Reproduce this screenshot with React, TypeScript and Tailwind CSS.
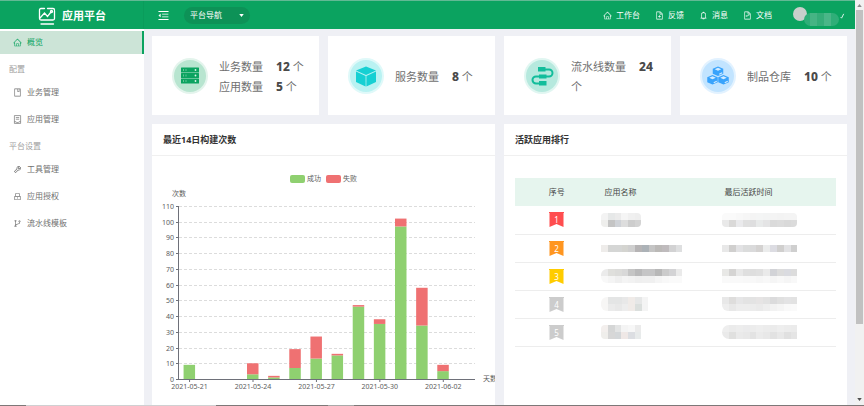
import type { ReactNode } from "react";
import type { IconType } from "react-icons";
import {
  AiOutlineBell,
  AiOutlineBook,
  AiOutlineBranches,
  AiOutlineFileAdd,
  AiOutlineFileText,
  AiOutlineHome,
  AiOutlineLock,
  AiOutlineMenuFold,
  AiOutlineTool,
} from "react-icons/ai";

function Logo() {
  return (
    <svg viewBox="0 0 36 36" className="size-[18px]" fill="none" stroke="white" strokeWidth="2.6" strokeLinecap="round">
      <path d="M13 3H6Q3 3 3 6v17q0 3 3 3h24q3 0 3-3V8M19 3h11q3 0 3 3" />
      <path d="M4 22l9-10 6 7 7-9" />
      <circle cx="27" cy="9" r="2" />
      <path d="M6 34h25" />
    </svg>
  );
}

function AppFormIcon({ className }: { className?: string }) {
  return (
    <svg viewBox="0 0 16 16" className={className} fill="none" stroke="currentColor" strokeWidth="1.2">
      <path d="M2.5 1h11v14h-11zM5 4.5h6M5 7.5h6M2.5 12h3l1 1.5h3l1-1.5h3" />
    </svg>
  );
}

function SideItem({ icon: Icon, label, active }: { icon: IconType | typeof AppFormIcon; label: string; active?: boolean }) {
  return (
    <a
      href="#"
      className={
        "mb-1 flex h-[23px] items-center gap-[5px] pb-px pl-[13px] " +
        (active ? "border-r-2 border-[#0ba360] bg-[#cce4d7] text-[#0ba360]" : "text-[#707070]")
      }
    >
      <Icon className="size-[9px]" />
      {label}
    </a>
  );
}

function SideLabel({ children }: { children: ReactNode }) {
  return <p className="flex h-[23px] items-center pb-0.5 pl-[9px] text-[#a0a0a0]">{children}</p>;
}

function TopLink({ icon: Icon, label }: { icon: IconType; label: string }) {
  return (
    <a href="#" className="flex items-center gap-1">
      <Icon className="size-[9px]" />
      {label}
    </a>
  );
}

function Badge({ ring, fill, children }: { ring: string; fill: string; children: ReactNode }) {
  return (
    <svg viewBox="0 0 72 72" className="size-9 shrink-0">
      <circle cx="36" cy="36" r="36" fill={ring} />
      <circle cx="36" cy="36" r="32" fill={fill} />
      {children}
    </svg>
  );
}

function ServerBadge() {
  return (
    <Badge ring="#e3f4ec" fill="#b8e5d0">
      {[19, 30, 41].map((y) => (
        <g key={y}>
          <rect x="18" y={y} width="36" height="10" rx="1" fill="#0ba360" />
          <path d={`M23 ${y + 3}v4M28 ${y + 3}v4`} stroke="#7fd0a8" strokeWidth="1.5" />
          <circle cx="47" cy={y + 5} r="1.8" fill="#d9f5e8" />
        </g>
      ))}
    </Badge>
  );
}

function CubeBadge() {
  return (
    <Badge ring="#dff9f9" fill="#b9f2f2">
      <path d="M36 17l20 8-20 9-20-9z" fill="#16d0d3" />
      <path d="M16 27l19.200 9v21L16 48z" fill="#16d0d3" />
      <path d="M56 27l-19.200 9v21L56 48z" fill="#16d0d3" />
    </Badge>
  );
}

function PipeBadge() {
  return (
    <Badge ring="#e0f6f1" fill="#b6e9de">
      <path d="M34 23h16a6.500 6.500 0 0 1 0 14H24a6.500 6.500 0 0 0 0 14h20" fill="none" stroke="#12bd9b" strokeWidth="4" />
      <path d="M28 18h15v9H28zM30 33h15v8H30zM30 46h15v9H30z" fill="#12bd9b" />
    </Badge>
  );
}

function BoxesBadge() {
  return (
    <Badge ring="#e2f2ff" fill="#c2e4ff">
      {[
        [36, 17],
        [25, 34],
        [47, 34],
      ].map(([x, y]) => (
        <g key={x} transform={`translate(${x} ${y})`}>
          <path d="M0 0l10.500 4.500v10L0 19l-10.500-4.500v-10z" fill="#38a3fc" />
          <path d="M0 2.500l6.500 3L0 8.500l-6.500-3z" fill="#d5ecff" />
          <path d="M2.500 15.500l6-3" stroke="#d5ecff" strokeWidth="2.500" />
        </g>
      ))}
    </Badge>
  );
}

function Stat({ label, value }: { label: string; value: number }) {
  return (
    <p>
      {label}
      <b className="ml-[13px] text-xs font-extrabold text-[#4a4a4a]">{value}</b> 个
    </p>
  );
}

function StatCard({ icon, children }: { icon: ReactNode; children: ReactNode }) {
  return (
    <section className="flex h-[79px] min-w-0 items-center gap-[11px] bg-white pr-[11px] pl-5">
      {icon}
      <div className="min-w-0 pt-[3px] text-[11px] leading-5 text-[#707070]">{children}</div>
    </section>
  );
}

function Panel({ title, children }: { title: string; children: ReactNode }) {
  return (
    <section className="flex min-w-0 flex-col overflow-hidden bg-white">
      <h2 className="flex h-8 shrink-0 items-center border-b border-[#f0f0f0] px-[11px] text-[9px] font-bold text-[#333]">{title}</h2>
      {children}
    </section>
  );
}

const builds = [
  { day: "2021-05-21", ok: 9, bad: 0 },
  { day: "2021-05-22", ok: 0, bad: 0 },
  { day: "2021-05-23", ok: 0, bad: 0 },
  { day: "2021-05-24", ok: 3, bad: 7 },
  { day: "2021-05-25", ok: 1, bad: 1 },
  { day: "2021-05-26", ok: 7, bad: 12 },
  { day: "2021-05-27", ok: 13, bad: 14 },
  { day: "2021-05-28", ok: 15, bad: 1 },
  { day: "2021-05-29", ok: 46, bad: 1 },
  { day: "2021-05-30", ok: 35, bad: 3 },
  { day: "2021-05-31", ok: 97, bad: 5 },
  { day: "2021-06-01", ok: 34, bad: 24 },
  { day: "2021-06-02", ok: 5, bad: 4 },
  { day: "2021-06-03", ok: 0, bad: 0 },
];

const AXIS_LEFT = 27;
const AXIS_RIGHT = 323;
const BASE = 223;
const UNIT = 173 / 110;
const STEP = (AXIS_RIGHT - AXIS_LEFT) / builds.length;

function BuildChart() {
  return (
    <svg viewBox="0 0 343 249" className="w-full shrink-0 text-[7px]" fill="#5c5c5c" role="img" aria-label="最近14日构建次数">
      <rect x="138" y="19" width="15" height="8" rx="2" fill="#8fd070" />
      <text x="155" y="25">成功</text>
      <rect x="174" y="19" width="15" height="8" rx="2" fill="#ef7172" />
      <text x="191" y="25">失败</text>
      <text x="27" y="40" textAnchor="middle">次数</text>
      {Array.from({ length: 12 }, (_, i) => {
        const y = Math.round(BASE - i * 10 * UNIT) + 0.5;
        return (
          <g key={i}>
            {i > 0 && <path d={`M${AXIS_LEFT} ${y}H${AXIS_RIGHT}`} stroke="#dcdcdc" strokeDasharray="3 2" />}
            <path d={`M${AXIS_LEFT - 3} ${y}h3`} stroke="#6e7079" />
            <text x="22" y={y + 2} textAnchor="end">{i * 10}</text>
          </g>
        );
      })}
      {builds.map((b, i) => {
        const mid = AXIS_LEFT + STEP * (i + 0.5);
        return (
          <g key={b.day}>
            <rect x={mid - 6} y={BASE - b.ok * UNIT} width="11.5" height={b.ok * UNIT} fill="#8fd070" />
            <rect x={mid - 6} y={BASE - (b.ok + b.bad) * UNIT} width="11.5" height={b.bad * UNIT} fill="#ef7172" />
            {i % 3 === 0 && (
              <>
                <path d={`M${mid} ${BASE}v3`} stroke="#6e7079" />
                <text x={mid} y="233" textAnchor="middle">{b.day}</text>
              </>
            )}
          </g>
        );
      })}
      <path d={`M26.500 50V${BASE + 0.5}H${AXIS_RIGHT}`} fill="none" stroke="#6e7079" />
      <text x="331" y="225">天数</text>
    </svg>
  );
}

/* Masked value: rows of tinted blocks, one string of colours per row. */
function Masked({ rows, wide, pill }: { rows: string[]; wide: string; pill?: string }) {
  return (
    <div className={`${wide} ${pill ?? ""} overflow-hidden`}>
      {rows.map((row, r) => (
        <div key={r} className="flex h-[7px]">
          {row.split(" ").map((c, i) => (
            <span key={i} className="flex-1" style={{ background: `#${c}` }} />
          ))}
        </div>
      ))}
    </div>
  );
}

const ranks = [
  {
    color: "#ff4d4f",
    name: <Masked wide="w-[40px]" pill="rounded-sm" rows={["f3f3f3 e6e8e8 ebebeb f5f5f5 f0f0f0 eeeeee", "eeeeec c4c4c4 cfd2d7 dddddd cdcdcd d3d3d3"]} />,
    time: <Masked wide="w-[75px]" pill="rounded-sm" rows={["fafafa fafafa f8f8f8 f6f6f6 f4f4f4 f4f5f5 f3f4f4 f4f4f4 f3f3f3 f4f4f4 f4f4f4", "e9e9e9 dad9d8 eaeaec e0e0e0 dededf e8eaea e4e4e5 dadada dcdcdc d9d9d9 dbdbdb"]} />,
  },
  {
    color: "#ff9620",
    name: <Masked wide="w-[81px]" rows={["eeecea d5d6d5 d5d6d5 d4d4d0 cfcfcf b6b4b5 acb2b7 c4c4c4 bbb9b7 bfbbbd d2d2d3 dedfe0"]} />,
    time: <Masked wide="w-[75px]" rows={["e8e8e8 d0cfce e2e2e4 dbdcdc dadadb d4d2d1 ebecec dcdce2 d0cfce e2e2e4 cfcfcf"]} />,
  },
  {
    color: "#ffcc00",
    name: <Masked wide="w-[81px]" pill="rounded-l-md" rows={["ebebeb dfdfdc dcdcda d8d8d8 c5c5c5 b9b9ba c5c5c6 c5c5c6 b8b8b8 cbcbcb d3d3d5 eaeaea", "f8f8f8 f4f4f4 efefef f4f4f4 f2f2f2 efefef f0f0f0 f0f0f0 f5f5f5 f8f8f8 fafafa fafafa"]} />,
    time: <Masked wide="w-[75px]" rows={["e8e8e6 d5d4d3 e8e8e8 dfdfdf dedede e0e0e0 eaeaea d2d3d7 dcdcdc dadbe0 dcdcdc", "f9f9f9 f9f9f9 f9f9f9 f8f8f8 f8f8f8 f6f6f6 f8f8f8 f5f5f5 f8f8f8 f5f5f5 f8f8f8"]} />,
  },
  {
    color: "#cccccc",
    name: <Masked wide="w-[47px]" pill="rounded-l-md" rows={["f7f6f5 e4e5e5 e4e5e5 e8e8e8 f0ebe8 e6e7e7 f4f4f4", "f7f6f5 ebebeb e8e8e8 ededed f0ebe8 dbdfdd f4f4f4"]} />,
    time: <Masked wide="w-[75px]" pill="rounded-bl-md" rows={["e8e8e8 dedddc e6e6e7 e3e3e3 e3e3e3 e6e4e4 e2e2e2 dbdbdc e0e0e0 e3e3e4 e2e2e2", "eeeeee e8e8e8 ededed ededed ececec eaeaea eeeeee f2f2f2 f5f5f5 f9f9f9 fafafa"]} />,
  },
  {
    color: "#cccccc",
    name: <Masked wide="w-[40px]" pill="rounded-l-sm" rows={["f3efed d5d6d6 e3e4e4 f4f4f4 f7f7f7 ebebeb", "efeeeb d7d7d7 d4d7d9 efe8e6 dcdee2 e8ebeb"]} />,
    time: <Masked wide="w-[75px]" pill="rounded-l-lg" rows={["eeeeee ebebeb ededed ebebec ececec eeeeee ececec ebebeb eeeeee ececec ebebeb", "eaeaea e0e0df eaeaea e8e8e8 e3e3e3 ebebeb e8e8e8 e2e2e2 e8e8e8 e0e0e0 e5e5e5"]} />,
  },
];

export default function App() {
  return (
    <div className="flex h-screen flex-col overflow-hidden bg-[#eff0f5] font-['Noto_Sans','Noto_Sans_CJK_SC',sans-serif] text-[8px] leading-3">
      <div className="flex min-h-0 flex-1">
        <div className="flex min-w-0 flex-1 flex-col">
          <header className="flex h-[29px] shrink-0 items-center border-t border-[#62b994] bg-[#0ba360] text-white">
            <div className="flex h-full w-36 shrink-0 items-center gap-1.5 border-r border-[#0a9c5b] pt-0.5 pl-[38px]">
              <Logo />
              <h1 className="text-[11px] font-bold">应用平台</h1>
            </div>
            <button type="button" aria-label="收起菜单" className="ml-[13px]">
              <AiOutlineMenuFold className="size-[13px]" />
            </button>
            <div className="relative ml-3.5">
              <select aria-label="平台导航" className="h-[17px] w-[66px] appearance-none rounded-full bg-[#0d9257] pl-1.5 text-[8px] leading-3">
                <option>平台导航</option>
              </select>
              <svg viewBox="0 0 6 4" className="pointer-events-none absolute top-[7px] right-1.5 h-[3px] w-[5px]" fill="white">
                <path d="M0 0h6L3 4z" />
              </svg>
            </div>
            <nav className="mr-[21px] ml-auto flex items-center gap-[15px]">
              <TopLink icon={AiOutlineHome} label="工作台" />
              <TopLink icon={AiOutlineFileAdd} label="反馈" />
              <TopLink icon={AiOutlineBell} label="消息" />
              <TopLink icon={AiOutlineFileText} label="文档" />
            </nav>
            <div className="mr-2.5 flex items-center pt-0.5">
              <span className="mb-1 size-[14px] rounded-full bg-[#c9cfcc]" />
              <span className="-ml-[3px] mt-1.5 flex h-[13px] w-[35px] overflow-hidden rounded-full bg-[#2fae78]">
                <span className="ml-1.5 w-[7px] bg-[#45b484]" />
                <span className="w-[7px] bg-[#35ad79]" />
                <span className="w-[7px] bg-[#4ab688]" />
              </span>
              <svg viewBox="0 0 5 7" className="size-[6px]" stroke="white" fill="none">
                <path d="M1 5l1 1 2.500-5" />
              </svg>
            </div>
          </header>

          <div className="flex min-h-0 flex-1">
            <aside className="w-36 shrink-0 bg-white pt-0.5">
              <SideItem icon={AiOutlineHome} label="概览" active />
              <SideLabel>配置</SideLabel>
              <SideItem icon={AiOutlineBook} label="业务管理" />
              <SideItem icon={AppFormIcon} label="应用管理" />
              <SideLabel>平台设置</SideLabel>
              <SideItem icon={AiOutlineTool} label="工具管理" />
              <SideItem icon={AiOutlineLock} label="应用授权" />
              <SideItem icon={AiOutlineBranches} label="流水线模板" />
            </aside>

            <main className="flex min-w-0 flex-1 flex-col gap-[9px] px-2 pt-[7px]">
              <div className="grid shrink-0 grid-cols-4 gap-[9px]">
                <StatCard icon={<ServerBadge />}>
                  <Stat label="业务数量" value={12} />
                  <Stat label="应用数量" value={5} />
                </StatCard>
                <StatCard icon={<CubeBadge />}>
                  <Stat label="服务数量" value={8} />
                </StatCard>
                <StatCard icon={<PipeBadge />}>
                  <Stat label="流水线数量" value={24} />
                </StatCard>
                <StatCard icon={<BoxesBadge />}>
                  <Stat label="制品仓库" value={10} />
                </StatCard>
              </div>

              <div className="grid min-h-0 flex-1 grid-cols-2 gap-[9px]">
                <Panel title="最近14日构建次数">
                  <BuildChart />
                </Panel>
                <Panel title="活跃应用排行">
                  <div className="px-[11px] pt-[22px]">
                    <table className="w-full table-fixed text-left text-[#444]">
                      <colgroup>
                        <col className="w-[26%]" />
                        <col className="w-[38%]" />
                        <col className="w-[36%]" />
                      </colgroup>
                      <thead>
                        <tr className="h-7 bg-[#e6f5ee]">
                          <th className="text-center font-normal">序号</th>
                          <th className="pl-1.5 font-normal">应用名称</th>
                          <th className="pl-1 font-normal">最后活跃时间</th>
                        </tr>
                      </thead>
                      <tbody>
                        {ranks.map((r, i) => (
                          <tr key={i} className="h-7 border-b border-[#ededed]">
                            <td>
                              <svg viewBox="0 0 15 15" className="mx-auto size-[15px]">
                                <path d="M0 0h15v1h-.500v14L7.500 12 .500 15V1H0z" fill={r.color} />
                                <text x="7.500" y="11" textAnchor="middle" fill="white" className="text-[8px]">{i + 1}</text>
                              </svg>
                            </td>
                            <td className="pl-[3px]">{r.name}</td>
                            <td className="pl-0.5">{r.time}</td>
                          </tr>
                        ))}
                      </tbody>
                    </table>
                  </div>
                </Panel>
              </div>
            </main>
          </div>
        </div>

        <div className="flex w-[9px] shrink-0 flex-col items-center bg-[#f1f1f1] py-1">
          <svg viewBox="0 0 6 4" className="h-[3px] w-[5px]" fill="#8a8a8a"><path d="M0 4h6L3 0z" /></svg>
          <div className="mt-[3px] h-[79%] w-[7px] bg-[#c1c1c1]" />
          <svg viewBox="0 0 6 4" className="mt-auto h-[3px] w-[5px]" fill="#505050"><path d="M0 0h6L3 4z" /></svg>
        </div>
      </div>
      <div className="flex h-px shrink-0 bg-[#7d7878]">
        <span className="w-[3%]" />
        <span className="w-[22%] bg-[#d0d0d2]" />
        <span className="w-[13%]" />
        <span className="w-[3%] bg-[#a9a9a9]" />
      </div>
    </div>
  );
}
